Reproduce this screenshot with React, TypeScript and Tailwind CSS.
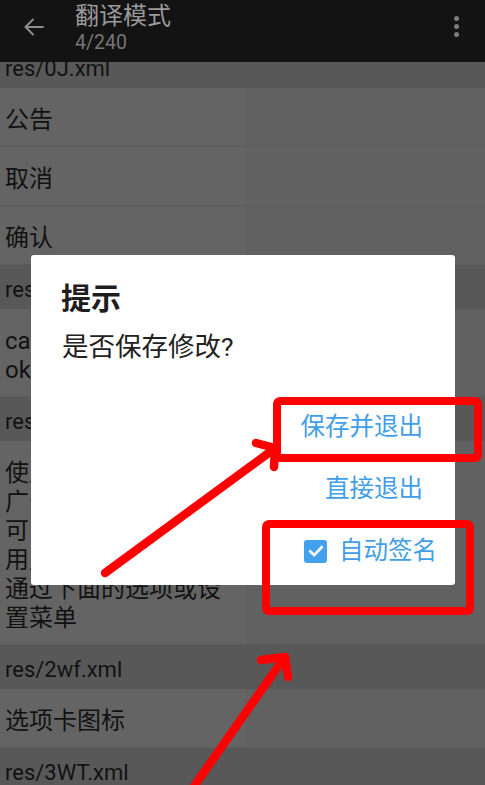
import React from "react";

const FONT = { fontFamily: 'Roboto, "Noto Sans CJK SC", sans-serif' };

function Header({ text, className = "" }: { text: string; className?: string }) {
  return (
    <div className={`h-[44px] shrink-0 flex items-center pl-[5px] pt-[4px] bg-[#585858] text-[22px] text-[#121212] ${className}`}>
      {text}
    </div>
  );
}

function Item({ lines }: { lines: string[] }) {
  return (
    <div className="flex shrink-0 bg-[#646464] shadow-[inset_0_-1px_0_#5d5d5d] text-[24px] leading-[29px] text-[#121212]">
      <div className="w-[245px] pl-[5px] pt-[18px] pb-[12px]">
        {lines.map((l, i) => (
          <div key={i} className="whitespace-nowrap">{l}</div>
        ))}
      </div>
      <div className="flex-1 bg-[#616161] shadow-[inset_0_-1px_0_#5d5d5d]" />
    </div>
  );
}

export default function App() {
  return (
    <div style={FONT} className="relative w-[485px] h-[785px] overflow-hidden bg-[#646464] flex flex-col">
      {/* Top bar */}
      <div className="h-[62px] shrink-0 bg-[#131313] flex items-start relative z-10">
        <div className="w-[75px] pl-[23px] pt-[16px]">
          <svg width="22" height="22" viewBox="0 0 22 22" fill="none" stroke="#8c8c8c" strokeWidth="2" strokeLinecap="round">
            <path d="M20 11H3" />
            <path d="M10 3.5L2.5 11L10 18.5" />
          </svg>
        </div>
        <div className="flex-1 flex flex-col pt-[1px]">
          <div className="text-[24px] leading-[30px] text-[#9a9a9a]">翻译模式</div>
          <div className="text-[19.5px] leading-[24px] text-[#767676]">4/240</div>
        </div>
        <div className="w-[56px] pt-[15.5px] flex flex-col items-center gap-[3px] pr-[1px]">
          <span className="w-[5px] h-[5px] rounded-full bg-[#7d7d7d]" />
          <span className="w-[5px] h-[5px] rounded-full bg-[#7d7d7d]" />
          <span className="w-[5px] h-[5px] rounded-full bg-[#7d7d7d]" />
        </div>
      </div>

      {/* List */}
      <div className="flex-1 overflow-hidden flex flex-col">
        <Header text="res/0J.xml" className="-mt-[18px]" />
        <Item lines={["公告"]} />
        <Item lines={["取消"]} />
        <Item lines={["确认"]} />
        <Header text="res/0k.xml" />
        <Item lines={["cancel_btn", "ok_button"]} />
        <Header text="res/1a.xml" />
        <Item
          lines={[
            "使用此功能前请先",
            "广告可以在设置中",
            "可以自定义主题和",
            "用户可以随时更改",
            "通过下面的选项或设",
            "置菜单",
          ]}
        />
        <Header text="res/2wf.xml" />
        <Item lines={["选项卡图标"]} />
        <Header text="res/3WT.xml" />
      </div>

      {/* Dialog */}
      <div className="absolute left-[31px] top-[255px] w-[424px] h-[330px] bg-white rounded-[3px] flex flex-col pt-[24px]">
        <div className="pl-[30px] h-[38px] flex items-center text-[30px] font-bold text-[#1e1e1e]">提示</div>
        <div className="pl-[31px] mt-[13px] h-[34px] flex items-center text-[26.5px] text-[#222222]">是否保存修改?</div>
        <div className="mt-[32px] flex flex-col items-end">
          <div className="h-[62px] flex items-center pr-[32px] text-[24.5px] text-[#3f9ee8]">保存并退出</div>
          <div className="h-[62px] flex items-center pr-[32px] text-[24.5px] text-[#3f9ee8]">直接退出</div>
          <div className="h-[62px] flex items-center pr-[18px] gap-[12px] text-[24.5px] text-[#3f9ee8]">
            <span className="w-[23px] h-[23px] rounded-[3px] bg-[#42a0ee] flex items-center justify-center">
              <svg width="18" height="18" viewBox="0 0 24 24" fill="none" stroke="white" strokeWidth="3.6" strokeLinecap="square">
                <path d="M4.5 12.5L9.5 17.5L19.5 7" />
              </svg>
            </span>
            <span>自动签名</span>
          </div>
        </div>
      </div>

      {/* Red annotations */}
      <svg className="absolute inset-0 pointer-events-none" width="485" height="785" viewBox="0 0 485 785" fill="none">
        <rect x="277" y="401" width="201" height="57" rx="3" stroke="#ff0000" strokeWidth="8" />
        <rect x="266" y="524" width="204" height="87" rx="3" stroke="#ff0000" strokeWidth="8" />
        <g stroke="#ff0000" strokeWidth="8.5" strokeLinecap="round" strokeLinejoin="round">
          <path d="M105 573L274 449" />
          <path d="M256 443L275 448L274 467" />
          <path d="M188 795L284 658" />
          <path d="M261 660L285 657L288 677" />
        </g>
      </svg>
    </div>
  );
}
